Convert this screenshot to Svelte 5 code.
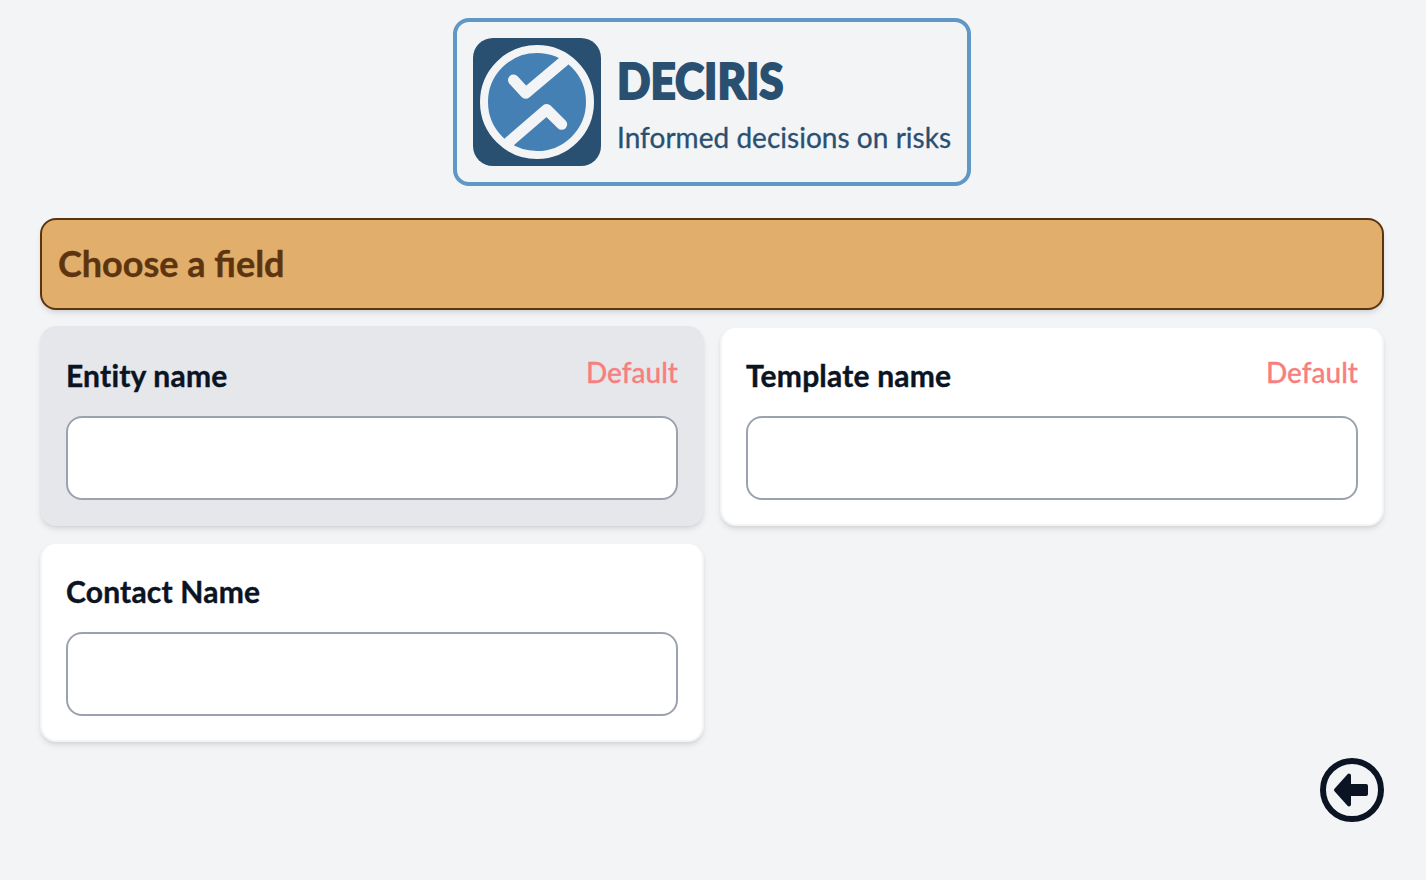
<script>
  const fields = [
    { name: 'Entity name', isDefault: true, active: true },
    { name: 'Template name', isDefault: true, active: false },
    { name: 'Contact Name', isDefault: false, active: false }
  ];
</script>

<main class="page">
  <div class="logo">
    <svg class="mark" viewBox="0 0 128 128" aria-hidden="true">
      <rect width="128" height="128" rx="20" fill="#2a5071" />
      <circle cx="64" cy="64" r="53" fill="#4580b5" stroke="#f3f4f6" stroke-width="8" />
      <path d="M40.5 42 L52.7 55.3 L91 23" fill="none" stroke="#f3f4f6" stroke-width="11" stroke-linecap="round" stroke-linejoin="round" />
      <path d="M36 104 L73.7 71.5 L88.7 86.3" fill="none" stroke="#f3f4f6" stroke-width="11" stroke-linecap="round" stroke-linejoin="round" />
    </svg>
    <div class="brand">
      <div class="name">DECIRIS</div>
      <div class="tag">Informed decisions on risks</div>
    </div>
  </div>

  <h1 class="banner">Choose a field</h1>

  <div class="grid">
    {#each fields as f}
      <section class="card" class:active={f.active}>
        <div class="head">
          <h2>{f.name}</h2>
          {#if f.isDefault}<span class="def">Default</span>{/if}
        </div>
        <input type="text" aria-label={f.name} />
      </section>
    {/each}
  </div>

  <div class="foot">
    <button class="back" aria-label="Back">
      <svg viewBox="0 0 64 64" width="64" height="64" aria-hidden="true">
        <circle cx="32" cy="32" r="29" fill="none" stroke="#0b1423" stroke-width="6" />
        <path d="M16 32 L29 17.5 V28 H46 V36 H29 V46.5 Z" fill="#0b1423" stroke="#0b1423" stroke-width="4" stroke-linejoin="round" />
      </svg>
    </button>
  </div>
</main>

<style>
  :global(body) {
    margin: 0;
    background: #f3f4f6;
  }
  .page {
    box-sizing: border-box;
    min-height: 880px;
    padding: 18px 42px 0 40px;
    font-family: Lato, "Noto Sans", sans-serif;
    display: flex;
    flex-direction: column;
  }
  .logo {
    align-self: center;
    box-sizing: border-box;
    width: 518px;
    height: 168px;
    border: 4px solid #6097c4;
    border-radius: 16px;
    padding: 16px;
    display: flex;
    gap: 16px;
    align-items: center;
  }
  .mark {
    width: 128px;
    height: 128px;
    flex: none;
  }
  .name {
    font-family: Lato, "Noto Sans", sans-serif;
    font-weight: 900;
    font-size: 50px;
    line-height: 56px;
    margin-top: 1px;
    color: #2a5071;
    -webkit-text-stroke: 2px #2a5071;
    transform: scaleX(0.88);
    transform-origin: left center;
    width: max-content;
  }
  .tag {
    margin-top: 12px;
    font-size: 28px;
    line-height: 34px;
    color: #2a5071;
    white-space: nowrap;
    letter-spacing: 0.03px;
    -webkit-text-stroke: 0.3px #2a5071;
  }
  .banner {
    margin: 32px 0 16px;
    box-sizing: border-box;
    height: 92px;
    background: #e2ae6b;
    border: 2px solid #5c3510;
    border-radius: 16px;
    padding: 0 16px 2px;
    display: flex;
    align-items: center;
    font-size: 36px;
    font-weight: 700;
    color: #5c3510;
    -webkit-text-stroke: 0.4px #5c3510;
    box-shadow: 0 4px 6px -1px rgba(0, 0, 0, 0.1), 0 2px 4px -2px rgba(0, 0, 0, 0.1);
  }
  .grid {
    display: grid;
    grid-template-columns: 1fr 1fr;
    grid-auto-rows: 200px;
    gap: 16px;
  }
  .card {
    box-sizing: border-box;
    background: #fff;
    border: 2px solid #f3f4f6;
    border-radius: 16px;
    padding: 24px;
    display: flex;
    flex-direction: column;
    box-shadow: 0 4px 6px -1px rgba(0, 0, 0, 0.1), 0 2px 4px -2px rgba(0, 0, 0, 0.1);
  }
  .card.active {
    background: #e5e7eb;
    border-color: #e5e7eb;
  }
  .head {
    height: 64px;
    flex: none;
    display: flex;
    justify-content: space-between;
    align-items: flex-start;
  }
  h2 {
    margin: -1px 0 0;
    font-size: 30px;
    line-height: 48px;
    font-weight: 700;
    letter-spacing: 0.2px;
    color: #0b1423;
    -webkit-text-stroke: 0.4px #0b1423;
  }
  .def {
    font-size: 28px;
    line-height: 40px;
    color: #f87f7f;
    font-weight: 500;
    -webkit-text-stroke: 0.3px #f87f7f;
  }
  input {
    box-sizing: border-box;
    width: 100%;
    height: 84px;
    background: #fff;
    border: 2px solid #9ca3af;
    border-radius: 16px;
    outline: none;
    flex: none;
  }
  .foot {
    display: flex;
    justify-content: flex-end;
    margin-top: 16px;
  }
  .back {
    width: 64px;
    height: 64px;
    padding: 0;
    border: 0;
    background: none;
    display: block;
  }
  .back svg { display: block; }
</style>
